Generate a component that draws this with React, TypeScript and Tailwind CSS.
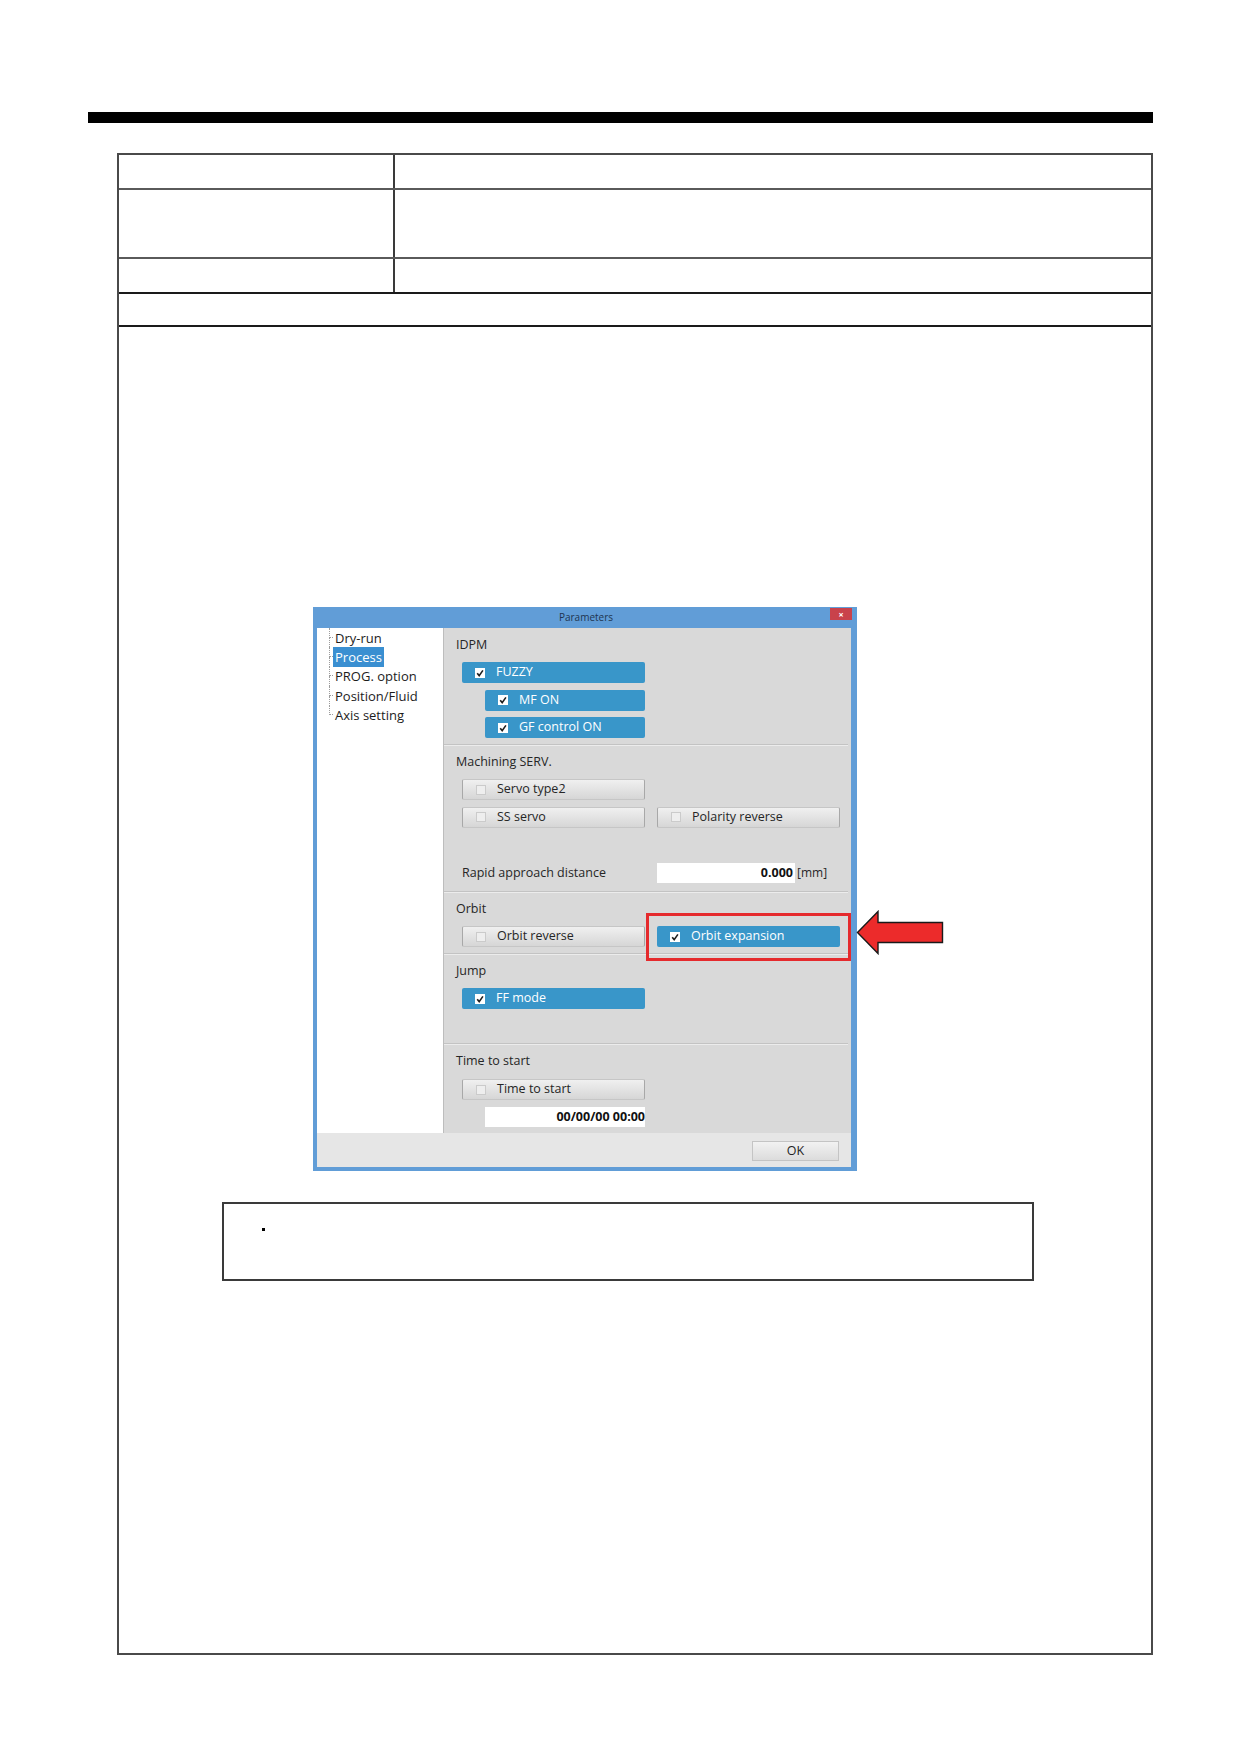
import clsx from "clsx";
import { twMerge } from "tailwind-merge";

const TREE = ["Dry-run", "Process", "PROG. option", "Position/Fluid", "Axis setting"];

function Check({ on }: { on: boolean }) {
  if (!on) {
    return <span className="h-[10px] w-[10px] shrink-0 border border-[#cbcbcb] bg-[#eeeeee]" />;
  }
  return (
    <span className="flex h-[10px] w-[10px] shrink-0 items-center justify-center bg-white">
      <svg viewBox="0 0 10 10" className="h-[10px] w-[10px]">
        <path d="M2.2 5.2 L4.2 7.6 L7.9 2.4" fill="none" stroke="#1e1e1e" strokeWidth="1.6" />
      </svg>
    </span>
  );
}

function Toggle({ label, on = false, className }: { label: string; on?: boolean; className?: string }) {
  return (
    <div
      className={twMerge(
        clsx(
          "flex h-[21px] w-[183px] items-center rounded-[2px] pl-[13px] text-[12.5px]",
          on
            ? "bg-[#3996c9] text-white"
            : "border border-[#c6c6c6] border-x-[#a8a8a8] bg-gradient-to-b from-[#f0f0f0] to-[#d6d6d6] text-[#262626]",
        ),
        className,
      )}
    >
      <Check on={on} />
      <span className="ml-[11px] leading-none">{label}</span>
    </div>
  );
}

function Section({ title, className, children }: { title: string; className?: string; children: React.ReactNode }) {
  return (
    <div className={clsx("mr-[3px] border-b border-[#c3c3c3] shadow-[0_1px_0_#ececec]", className)}>
      <div className="h-[26px] pl-[12px] pt-[8px] text-[12.5px] leading-[18px] text-[#262626]">{title}</div>
      <div className="flex flex-col gap-[6.5px] pl-[18px] pt-[8px]">{children}</div>
    </div>
  );
}

function ParametersDialog() {
  return (
    <div className="relative flex h-[564px] w-[544px] flex-col bg-[#619dd7] pb-[4px] pl-[4px] pr-[6px]">
      {/* title bar */}
      <div className="relative flex h-[21px] shrink-0 items-center justify-center">
        <span className="pl-[4px] text-[10px] text-[#1f3550]">Parameters</span>
        <button className="absolute right-[-1px] top-[1px] flex h-[12px] w-[22px] items-center justify-center bg-[#c9424b] text-[9px] font-bold leading-none text-white">
          ×
        </button>
      </div>

      <div className="flex h-[505px]">
        {/* tree */}
        <div className="w-[127px] border-r border-[#bdbdbd] bg-white pl-[12px] text-[13px] text-[#1c1c1c]">
          {TREE.map((item, i) => (
            <div key={item} className="flex h-[19.4px] items-stretch">
              <div className="flex w-[4px] flex-col">
                <div className="h-1/2 border-b border-l border-dotted border-[#9d9d9d]" />
                <div className={clsx("h-1/2 border-l border-dotted", i === TREE.length - 1 ? "border-transparent" : "border-[#9d9d9d]")} />
              </div>
              <div className="flex items-center">
                <span className={clsx("px-[2px] leading-[20px]", item === "Process" && "bg-[#3a8fd1] text-white")}>
                  {item}
                </span>
              </div>
            </div>
          ))}
        </div>

        {/* settings */}
        <div className="flex w-[407px] flex-col bg-[#d9d9d9]">
          <Section title="IDPM" className="h-[117px]">
            <Toggle label="FUZZY" on />
            <Toggle label="MF ON" on className="ml-[23px] w-[160px]" />
            <Toggle label="GF control ON" on className="ml-[23px] w-[160px]" />
          </Section>

          <Section title="Machining SERV." className="h-[147px]">
            <Toggle label="Servo type2" />
            <div className="flex gap-[12px]">
              <Toggle label="SS servo" />
              <Toggle label="Polarity reverse" />
            </div>
            <div className="mt-[29px] flex items-center">
              <span className="w-[195px] text-[12.5px] text-[#262626]">Rapid approach distance</span>
              <div className="flex h-[20px] w-[138px] items-center justify-end bg-white pr-[2px] text-[12.5px] font-bold text-[#111]">
                0.000
              </div>
              <span className="ml-[2px] text-[12px] text-[#262626]">[mm]</span>
            </div>
          </Section>

          <Section title="Orbit" className="h-[62px]">
            <div className="flex gap-[12px]">
              <Toggle label="Orbit reverse" />
              <Toggle label="Orbit expansion" on />
            </div>
          </Section>

          <Section title="Jump" className="h-[90px]">
            <Toggle label="FF mode" on />
          </Section>

          <div className="h-[89px]">
            <div className="h-[26px] pl-[12px] pt-[8px] text-[12.5px] leading-[18px] text-[#262626]">Time to start</div>
            <div className="flex flex-col gap-[7px] pl-[18px] pt-[9px]">
              <Toggle label="Time to start" />
              <div className="ml-[23px] flex h-[20px] w-[160px] items-center justify-end bg-white text-[12.5px] font-bold text-[#111]">
                00/00/00 00:00
              </div>
            </div>
          </div>
        </div>
      </div>

      {/* footer */}
      <div className="flex h-[34px] justify-end bg-[#e6e6e6] pr-[12px] pt-[8px]">
        <button className="h-[20px] w-[87px] border border-[#c4c4c4] bg-gradient-to-b from-[#f2f2f2] to-[#dcdcdc] text-[12.5px] leading-none text-[#222]">
          OK
        </button>
      </div>

      {/* highlight around Orbit expansion */}
      <div className="absolute left-[333px] top-[306px] h-[48px] w-[205px] border-[3px] border-[#e52a2d]" />
      <svg className="absolute left-[543px] top-[303px] h-[45px] w-[88px]" viewBox="0 0 88 45">
        <polygon
          points="1.5,22.5 22,1.5 22,12.5 86.5,12.5 86.5,32.5 22,32.5 22,43.5"
          fill="#ec2b2b"
          stroke="#1a1a1a"
          strokeWidth="1.4"
          strokeLinejoin="miter"
        />
      </svg>
    </div>
  );
}

export default function App() {
  return (
    <div className="h-[1754px] w-[1239px] overflow-hidden bg-white pt-[112px] font-['Open_Sans',sans-serif]">
      <div className="ml-[88px] h-[11px] w-[1065px] bg-black" />

      <div className="ml-[117px] mt-[30px] w-[1036px] border-2 border-[#4a4a4a]">
        <div className="flex h-[35px] border-b-2 border-[#5a5a5a]">
          <div className="w-[276px] border-r-2 border-[#3a3a3a]" />
          <div className="flex-1" />
        </div>
        <div className="flex h-[69px] border-b-2 border-[#5a5a5a]">
          <div className="w-[276px] border-r-2 border-[#3a3a3a]" />
          <div className="flex-1" />
        </div>
        <div className="flex h-[35px] border-b-2 border-[#1a1a1a]">
          <div className="w-[276px] border-r-2 border-[#3a3a3a]" />
          <div className="flex-1" />
        </div>
        <div className="h-[33px] border-b-2 border-[#1a1a1a]" />

        <div className="h-[1326px] pl-[194px] pt-[280px]">
          <ParametersDialog />
          <div className="-ml-[91px] mt-[31px] h-[79px] w-[812px] border-2 border-[#3a3a3a] pl-[38px] pt-[24px]">
            <div className="h-[3px] w-[3px] bg-black" />
          </div>
        </div>
      </div>
    </div>
  );
}
